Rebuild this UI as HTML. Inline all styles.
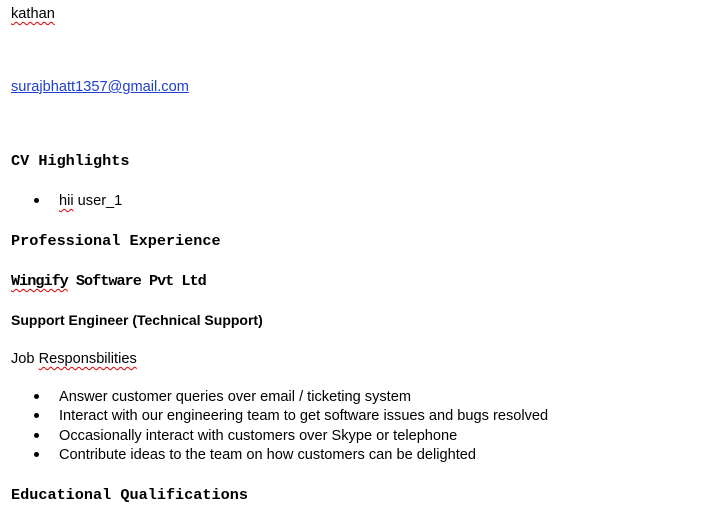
<html><head><style>
body{margin:0;width:724px;height:513px;background:#fff;position:relative;overflow:hidden;font-family:"Liberation Sans",sans-serif;font-size:14.6px;color:#000}
.t{position:absolute;left:11px;height:20px;line-height:20px;white-space:nowrap}
.h{font-family:"Liberation Mono",monospace;font-weight:bold;font-size:15.2px}
.b{left:59px}
.d{position:absolute;left:34px;width:5px;height:5px;border-radius:50%;background:#000}
.sq{text-decoration:underline wavy #d00;text-decoration-thickness:1px;text-underline-offset:3px}
a{color:#1f3fd0;text-decoration:underline}
</style></head><body>
<div class="t" style="top:4px"><span class="sq">kathan</span></div>
<div class="t" style="top:77px"><a>surajbhatt1357@gmail.com</a></div>
<div class="t h" style="top:151px">CV Highlights</div>
<div class="d" style="top:198px"></div><div class="t b" style="top:191px"><span class="sq">hii</span> user_1</div>
<div class="t h" style="top:231px">Professional Experience</div>
<div class="t h" style="top:271px;letter-spacing:-1px"><span class="sq">Wingify</span> Software Pvt Ltd</div>
<div class="t" style="top:310px;font-weight:bold;font-size:14px">Support Engineer (Technical Support)</div>
<div class="t" style="top:349px">Job <span class="sq">Responsbilities</span></div>
<div class="d" style="top:394px"></div><div class="t b" style="top:387px">Answer customer queries over email / ticketing system</div>
<div class="d" style="top:413px"></div><div class="t b" style="top:406px">Interact with our engineering team to get software issues and bugs resolved</div>
<div class="d" style="top:433px"></div><div class="t b" style="top:426px">Occasionally interact with customers over Skype or telephone</div>
<div class="d" style="top:452px"></div><div class="t b" style="top:445px">Contribute ideas to the team on how customers can be delighted</div>
<div class="t h" style="top:485px">Educational Qualifications</div>
</body></html>
